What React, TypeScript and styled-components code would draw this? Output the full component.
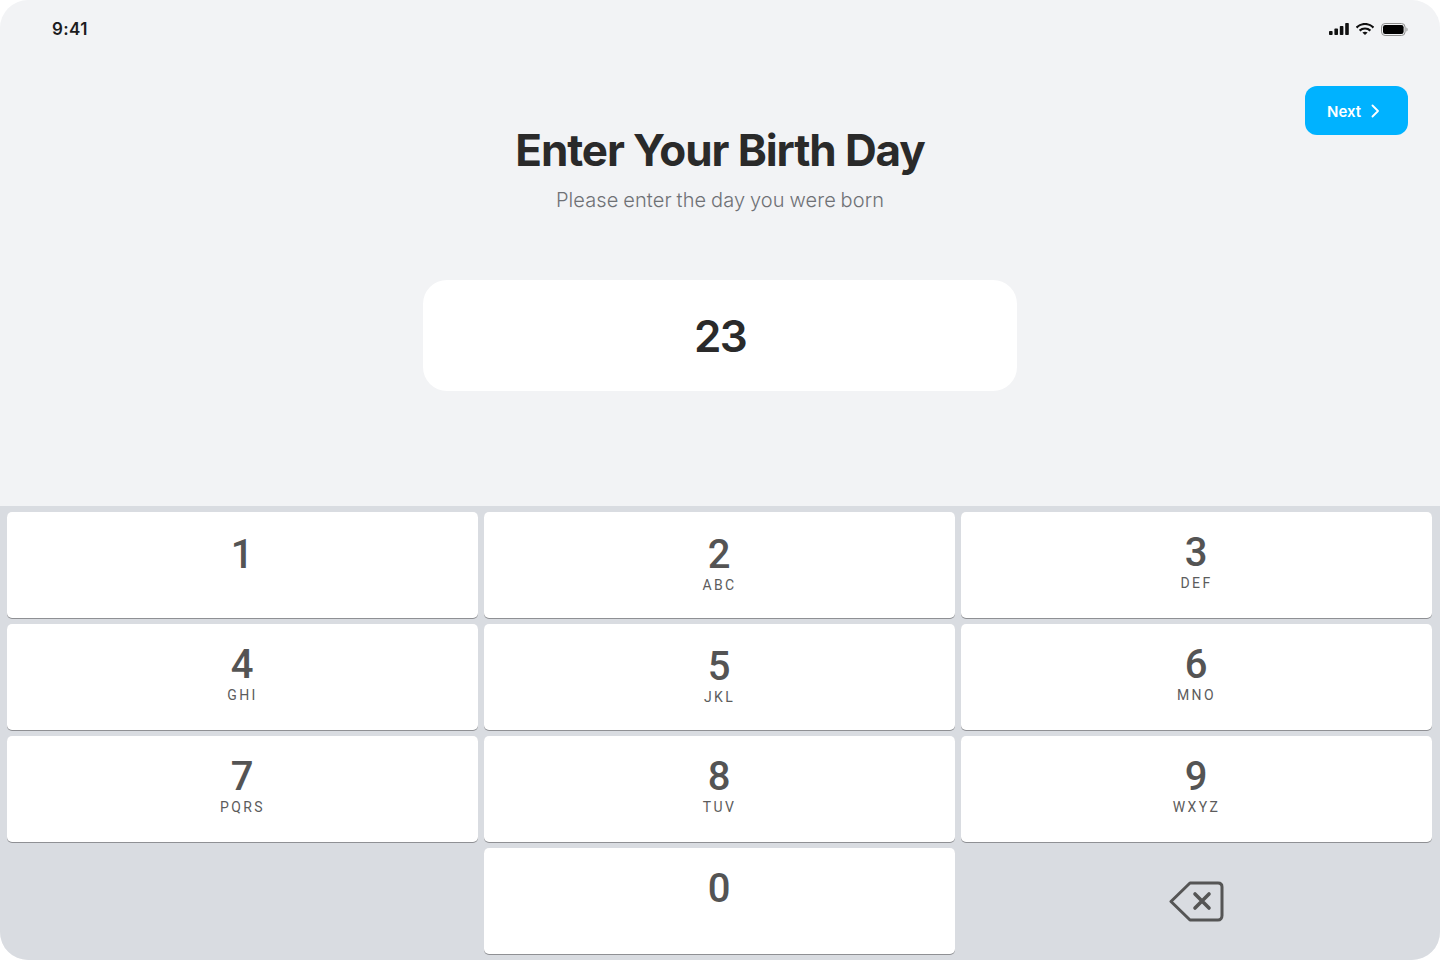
import styled, { createGlobalStyle } from "styled-components";

const GlobalStyle = createGlobalStyle`
    html, body {
        margin: 0;
        padding: 0;
        background-color: #ffffff;
    }
    * {
        box-sizing: border-box;
    }
`;

const Screen = styled.div`
    width: 1440px;
    height: 960px;
    border-radius: 28px;
    overflow: hidden;
    background-color: #f2f3f5;
    display: flex;
    flex-direction: column;
    font-family: Inter, "Liberation Sans", sans-serif;
`;

const StatusBar = styled.div`
    height: 58px;
    padding: 0 32px 0 52px;
    display: flex;
    align-items: center;
    justify-content: space-between;
`;

const Clock = styled.span`
    font-size: 17px;
    font-weight: 600;
    letter-spacing: 0.4px;
    color: #1c1c1e;
`;

const StatusIcons = styled.div`
    display: flex;
    align-items: center;
    gap: 7px;
`;

const Content = styled.div`
    height: 448px;
    display: grid;
    grid-template-columns: 1fr 594px 1fr;
    align-items: start;
`;

const Copy = styled.div`
    display: flex;
    flex-direction: column;
    align-items: center;
`;

const Title = styled.h1`
    margin: 62px 0 0;
    font-size: 44px;
    line-height: 60px;
    font-weight: 700;
    letter-spacing: -1.1px;
    white-space: nowrap;
    color: #2a2a2a;
`;

const Subtitle = styled.p`
    margin: 6px 0 0;
    font-size: 20px;
    line-height: 28px;
    font-weight: 300;
    letter-spacing: 0.12px;
    word-spacing: -1px;
    white-space: nowrap;
    color: #6f7175;
`;

const ValueBox = styled.div`
    width: 594px;
    height: 111px;
    margin-top: 66px;
    border-radius: 24px;
    background-color: #ffffff;
    display: flex;
    align-items: center;
    justify-content: center;
    font-size: 44px;
    font-weight: 600;
    letter-spacing: -1.6px;
    color: #2a2a2a;
`;

const Actions = styled.div`
    display: flex;
    justify-content: flex-end;
    padding: 28px 32px 0 0;
`;

const NextButton = styled.button`
    width: 103px;
    height: 49px;
    border: none;
    border-radius: 12px;
    background-color: #00b2ff;
    color: #ffffff;
    font-family: inherit;
    font-size: 15px;
    font-weight: 600;
    display: flex;
    align-items: center;
    justify-content: flex-start;
    gap: 10px;
    padding: 1px 0 0 22px;
`;

const Keypad = styled.div`
    flex: 1;
    background-color: #d9dce1;
    padding: 6px 8px 6px 7px;
    display: grid;
    grid-template-columns: repeat(3, 471px);
    grid-auto-rows: 106px;
    gap: 6px;
`;

const Key = styled.div<{ $offset: number }>`
    border-radius: 5px;
    background-color: #ffffff;
    box-shadow: 0 1px 0 #8f9094;
    display: flex;
    flex-direction: column;
    align-items: center;
    padding-top: ${(props) => props.$offset}px;
    font-family: Roboto, "Liberation Sans", sans-serif;
    color: #545454;
`;

const Digit = styled.span`
    font-size: 40px;
    line-height: 40px;
    font-weight: 500;
    margin-left: -1px;
`;

const Letters = styled.span`
    margin-top: 1px;
    font-size: 14px;
    line-height: 18px;
    letter-spacing: 2.4px;
    font-weight: 400;
    color: #5c5c5c;
`;

const EmptySlot = styled.div``;

const BackspaceSlot = styled.div`
    display: flex;
    align-items: center;
    justify-content: center;
`;

const keys = [
    { digit: "1", letters: "", offset: 23 },
    { digit: "2", letters: "ABC", offset: 23 },
    { digit: "3", letters: "DEF", offset: 21 },
    { digit: "4", letters: "GHI", offset: 21 },
    { digit: "5", letters: "JKL", offset: 23 },
    { digit: "6", letters: "MNO", offset: 21 },
    { digit: "7", letters: "PQRS", offset: 21 },
    { digit: "8", letters: "TUV", offset: 21 },
    { digit: "9", letters: "WXYZ", offset: 21 },
];

const SignalIcon = () => (
    <svg width="20" height="12" viewBox="0 0 20 12" fill="#111">
        <rect x="0" y="8" width="3.6" height="4" rx="0.8" />
        <rect x="5.4" y="5.6" width="3.6" height="6.400" rx="0.8" />
        <rect x="10.8" y="3" width="3.6" height="9" rx="0.8" />
        <rect x="16.2" y="0" width="3.6" height="12" rx="0.8" />
    </svg>
);

const WifiIcon = () => (
    <svg width="18" height="12" viewBox="0 0 18 12" fill="none" stroke="#111" strokeWidth="2.2">
        <path d="M0.5 4.6C5.4 -0.2 12.6 -0.2 17.5 4.6" />
        <path d="M3.6 7.6C6.7 4.8 11.300 4.8 14.4 7.6" />
        <path d="M9 12 6.4 9.6C7.900 8.400 10.100 8.400 11.600 9.600Z" fill="#111" stroke="none" />
    </svg>
);

const BatteryIcon = () => (
    <svg width="27" height="13" viewBox="0 0 27 13" fill="none">
        <rect x="0.5" y="0.5" width="23.6" height="12" rx="3.6" stroke="#8e8e8e" />
        <rect x="2" y="2" width="20.6" height="9" rx="2.2" fill="#000" />
        <path d="M25.4 4.4C26.2 4.8 26.6 5.6 26.6 6.5S26.2 8.2 25.4 8.6Z" fill="#9a9a9a" />
    </svg>
);

const ChevronIcon = () => (
    <svg width="8" height="14" viewBox="0 0 8 14" fill="none" stroke="#fff" strokeWidth="1.8" strokeLinecap="round" strokeLinejoin="round">
        <path d="M1.5 1.500l5.500 5.500-5.500 5.500" />
    </svg>
);

const BackspaceIcon = () => (
    <svg width="56" height="42" viewBox="0 0 56 42" fill="none" stroke="#555" strokeWidth="3" strokeLinejoin="round" strokeLinecap="round">
        <path d="M21 3H49C51.500 3 53 4.500 53 7V35.500C53 38 51.500 40 49 40H21L2 21.500Z" />
        <path d="M26 14 40 28M40 14 26 28" strokeWidth="3.6" />
    </svg>
);

const App = () => {
    return (
        <>
            <GlobalStyle />
            <Screen>
                <StatusBar>
                    <Clock>9:41</Clock>
                    <StatusIcons>
                        <SignalIcon />
                        <WifiIcon />
                        <BatteryIcon />
                    </StatusIcons>
                </StatusBar>
                <Content>
                    <div />
                    <Copy>
                        <Title>Enter Your Birth Day</Title>
                        <Subtitle>Please enter the day you were born</Subtitle>
                        <ValueBox>23</ValueBox>
                    </Copy>
                    <Actions>
                        <NextButton>
                            Next
                            <ChevronIcon />
                        </NextButton>
                    </Actions>
                </Content>
                <Keypad>
                    {keys.map((key) => (
                        <Key key={key.digit} $offset={key.offset}>
                            <Digit>{key.digit}</Digit>
                            {key.letters && <Letters>{key.letters}</Letters>}
                        </Key>
                    ))}
                    <EmptySlot />
                    <Key $offset={21}>
                        <Digit>0</Digit>
                    </Key>
                    <BackspaceSlot>
                        <BackspaceIcon />
                    </BackspaceSlot>
                </Keypad>
            </Screen>
        </>
    );
};

export default App;
